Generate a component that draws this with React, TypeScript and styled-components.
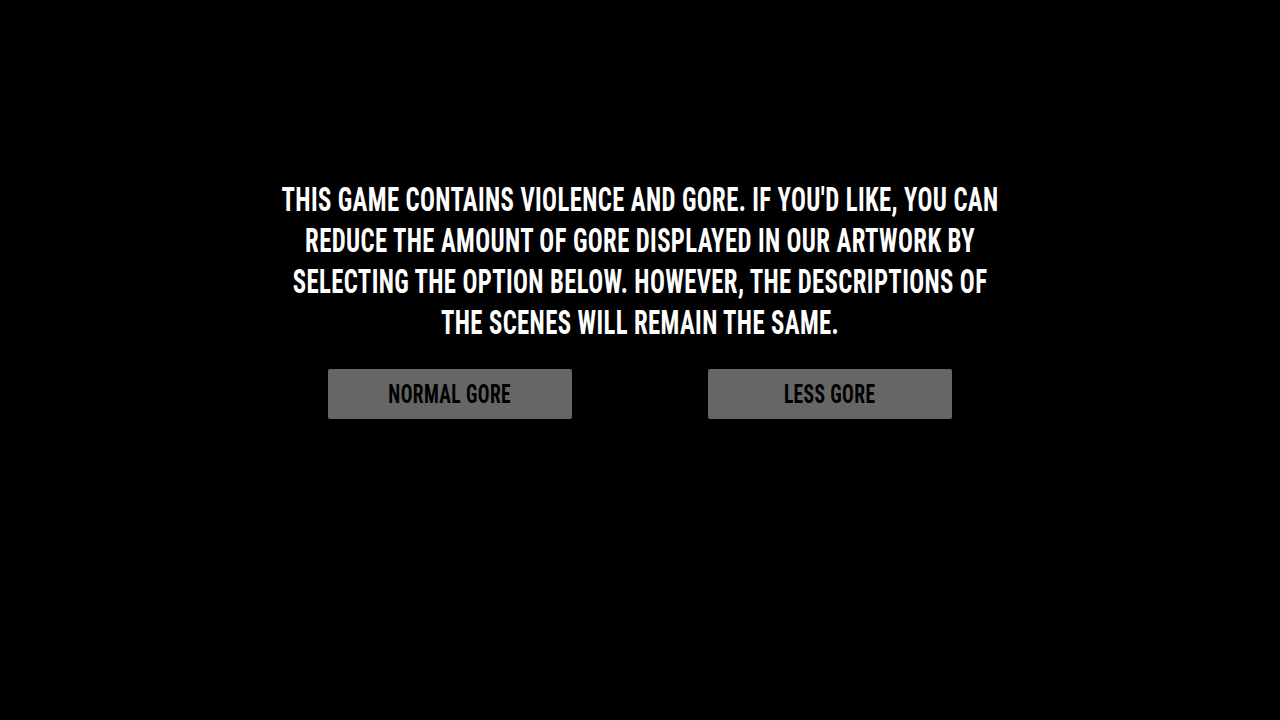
import React from 'react';
import styled, { createGlobalStyle } from 'styled-components';

const GlobalStyle = createGlobalStyle`
    html, body {
        margin: 0;
        padding: 0;
        background: #000;
    }
`;

// 검은 전체 화면
const Screen = styled.div`
    width: 1280px;
    height: 720px;
    background: #000;
    display: flex;
    flex-direction: column;
    align-items: center;
    padding-top: 179px;
    box-sizing: border-box;
    font-family: "Roboto Condensed", Roboto, "DejaVu Sans", sans-serif;
    font-weight: 700;
    text-transform: uppercase;
`;

// 좁은 글꼴 느낌을 내기 위해 가로로 눌러준다
const Notice = styled.p`
    margin: 0;
    color: #fff;
    font-size: 33px;
    line-height: 41px;
    text-align: center;
    white-space: nowrap;
    letter-spacing: 0.5px;
    transform: scaleX(0.75);
    transform-origin: center;
`;

const Choices = styled.div`
    display: flex;
    gap: 136px;
    margin-top: 26px;
`;

const ChoiceButton = styled.button`
    width: 244px;
    height: 50px;
    background: #666;
    border: none;
    border-radius: 2px;
    color: #000;
    font-family: inherit;
    font-weight: 700;
    font-size: 25px;
    text-transform: uppercase;
    cursor: pointer;
    padding: 0;
    display: flex;
    align-items: center;
    justify-content: center;
`;

const Label = styled.span`
    display: inline-block;
    white-space: nowrap;
    letter-spacing: 0.5px;
    transform: scaleX(0.78);
`;

const App = () => (
    <>
        <GlobalStyle />
        <Screen>
            <Notice>
                This game contains violence and gore. If you'd like, you can<br />
                reduce the amount of gore displayed in our artwork by<br />
                selecting the option below. However, the descriptions of<br />
                the scenes will remain the same.
            </Notice>
            <Choices>
                <ChoiceButton><Label>Normal Gore</Label></ChoiceButton>
                <ChoiceButton><Label>Less Gore</Label></ChoiceButton>
            </Choices>
        </Screen>
    </>
);

export default App;
